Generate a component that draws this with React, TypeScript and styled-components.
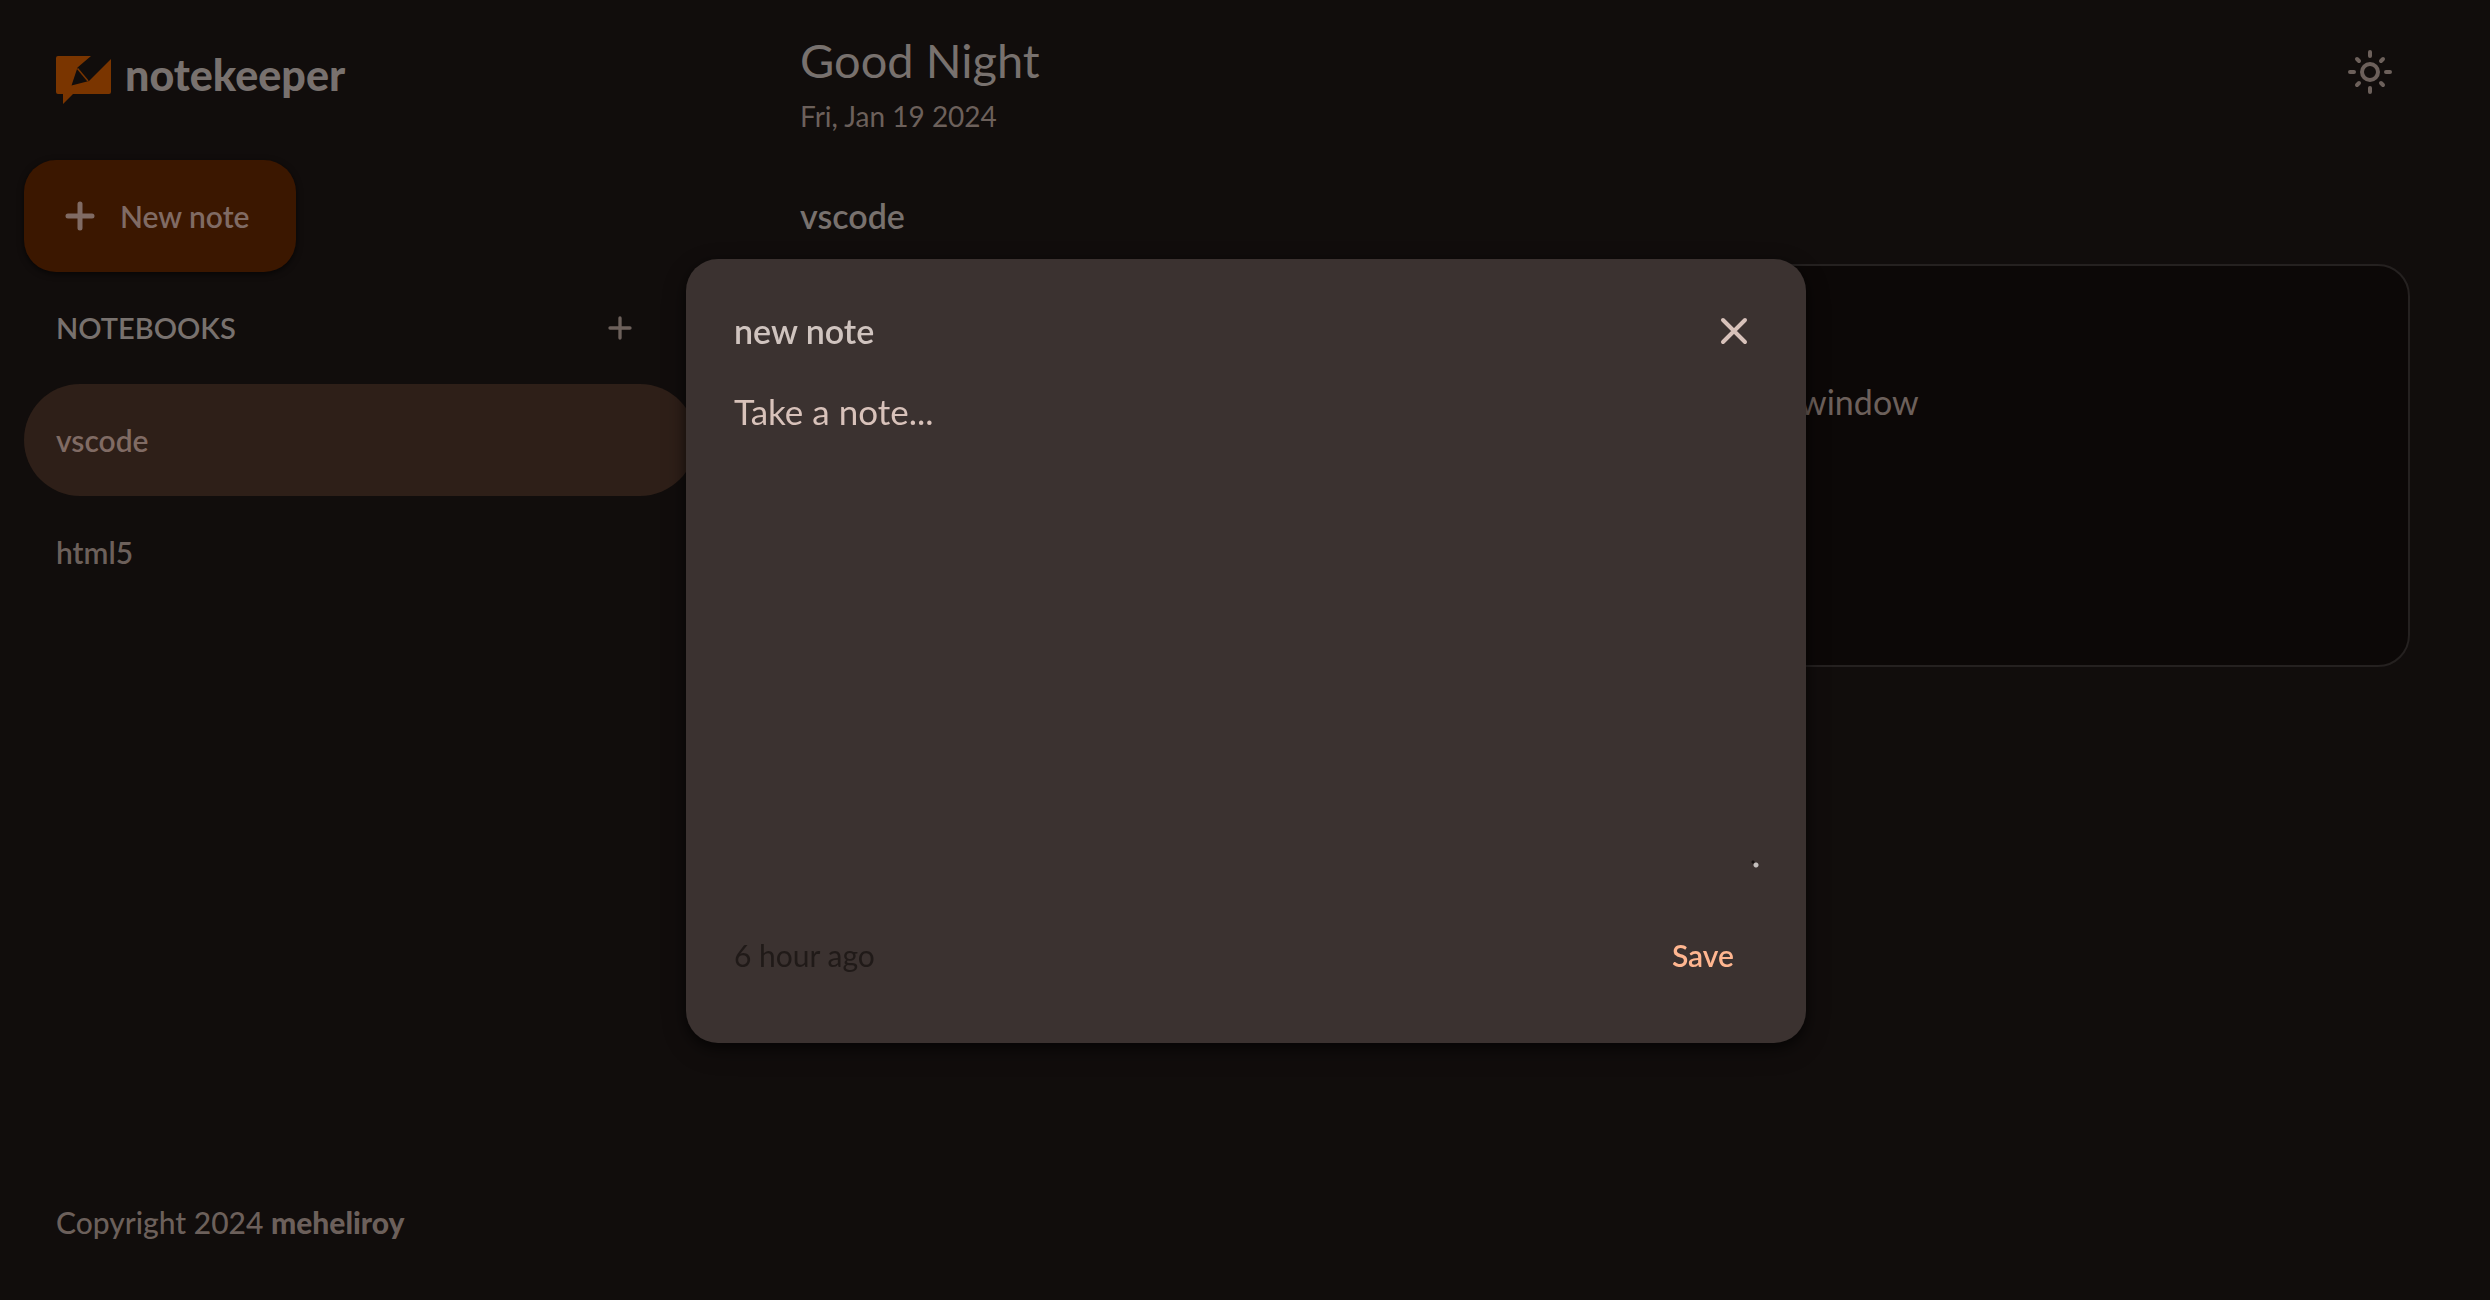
import React from "react";
import styled, { createGlobalStyle } from "styled-components";

const Global = createGlobalStyle`
  * { box-sizing: border-box; margin: 0; }
  body { margin: 0; background: #110d0c; font-family: Lato, "Open Sans", sans-serif; color: #78716e; }
  button { font: inherit; border: 0; background: none; padding: 0; cursor: pointer; }
  h1, h2, h3 { font-weight: 400; }
`;

const Page = styled.div`
  display: grid;
  grid-template-columns: 720px 1fr;
  min-height: 100vh;
`;

const Sidebar = styled.aside`
  display: flex;
  flex-direction: column;
  padding: 56px 24px 40px;
`;

const Brand = styled.a`
  display: flex;
  align-items: flex-start;
  gap: 14px;
  height: 48px;
  margin-bottom: 56px;
  padding-left: 32px;
  color: #78716e;
  font-size: 43px;
  font-weight: 900;
  line-height: 38px;
  text-decoration: none;
`;

const BrandMark = styled.svg`
  width: 55px;
  height: 48px;
`;

const NewNote = styled.button`
  && {
    display: flex;
    align-items: center;
    gap: 16px;
    align-self: flex-start;
    height: 112px;
    padding: 0 47px 0 32px;
    border-radius: 32px;
    background: #3b1700;
    color: #806b64;
    font-size: 30px;
    font-weight: 600;
    box-shadow: 0 2px 6px rgba(0, 0, 0, 0.6);
  }
`;

const SectionHead = styled.div`
  display: flex;
  align-items: center;
  justify-content: space-between;
  height: 112px;
  padding: 0 56px 0 32px;
`;

const SectionTitle = styled.h2`
  font-size: 29px;
  line-height: 40px;
  font-weight: 600;
`;

const IconButton = styled.button`
  display: grid;
  place-items: center;
  color: #6c605b;
  svg { display: block; }
`;

const NavItem = styled.a<{ $active?: boolean }>`
  display: flex;
  align-items: center;
  height: 112px;
  padding: 0 32px;
  border-radius: 56px;
  background: ${(p) => (p.$active ? "#2e1f18" : "transparent")};
  color: ${(p) => (p.$active ? "#806b64" : "#6c605b")};
  font-size: 30px;
  font-weight: 600;
  text-decoration: none;
`;

const Footer = styled.p`
  margin-top: auto;
  padding-left: 32px;
  color: #6c605b;
  font-size: 30px;
  font-weight: 500;
  line-height: 76px;
  a { color: inherit; font-weight: 900; text-decoration: none; }
`;

const Main = styled.main`
  padding: 32px 80px;
`;

const Header = styled.header`
  display: flex;
  justify-content: space-between;
  align-items: flex-start;
`;

const Greeting = styled.h1`
  font-size: 47px;
  line-height: 56px;
`;

const Today = styled.p`
  color: #6c605b;
  font-size: 28px;
  line-height: 56px;
`;

const ThemeButton = styled(IconButton)`
  width: 80px;
  height: 80px;
`;

const NotebookTitle = styled.h2`
  margin: 44px 0 20px;
  font-size: 34px;
  font-weight: 600;
  line-height: 56px;
`;

const Card = styled.article`
  min-height: 403px;
  padding: 32px 48px;
  border: 2px solid #252120;
  border-radius: 32px;
  background: #0c0807;
`;

const CardText = styled.p`
  padding-top: 76px;
  padding-left: 950px;
  color: #6c605b;
  font-size: 34px;
  line-height: 56px;
`;

const Overlay = styled.div`
  position: fixed;
  inset: 0;
  display: grid;
  place-items: center;
  padding: 2px 0 0 2px;
`;

const Dialog = styled.form`
  display: flex;
  flex-direction: column;
  width: 1120px;
  max-width: 90%;
  height: 784px;
  padding: 40px 44px 48px 48px;
  border-radius: 32px;
  background: #3b3230;
  box-shadow: 0 4px 12px rgba(0, 0, 0, 0.5), 0 8px 24px rgba(0, 0, 0, 0.3);
`;

const DialogTop = styled.div`
  display: flex;
  align-items: center;
  gap: 16px;
  height: 64px;
`;

const TitleInput = styled.input`
  flex: 1;
  min-width: 0;
  border: 0;
  padding: 0;
  outline: 0;
  background: none;
  color: #d0c4bf;
  font: 600 34px/56px Lato, "Open Sans", sans-serif;
`;

const CloseButton = styled(IconButton)`
  && {
    width: 56px;
    height: 56px;
    color: #d8c2ba;
  }
`;

const NoteText = styled.textarea`
  flex: 1;
  margin-top: 20px;
  padding: 0;
  border: 0;
  outline: 0;
  background: none;
  color: #d0c4bf;
  font: 400 35px/56px Lato, "Open Sans", sans-serif;
  resize: vertical;
  &::placeholder { color: #d8c2ba; opacity: 1; }
  &::-webkit-resizer {
    background:
      radial-gradient(circle at 9px 9px, #c4bfbd 2px, transparent 3px),
      radial-gradient(circle at 6px 6px, #14100f 1px, transparent 2px);
  }
`;

const DialogBottom = styled.div`
  display: flex;
  align-items: center;
  justify-content: space-between;
  height: 80px;
  margin-top: 44px;
`;

const Time = styled.span`
  color: #201a18;
  font-size: 30px;
`;

const Save = styled.button`
  && {
    padding: 20px 28px;
    color: #ffb690;
    font-size: 30px;
    font-weight: 600;
  }
`;

const Plus = ({ size, width }: { size: number; width: number }) => (
  <svg width={size} height={size} viewBox="0 0 48 48" stroke="currentColor" strokeWidth={width} strokeLinecap="round">
    <path d="M24 12v24M12 24h24" />
  </svg>
);

export default function App() {
  return (
    <>
      <Global />
      <Page>
        <Sidebar>
          <Brand href="#">
            <BrandMark viewBox="0 0 55 48" aria-hidden="true">
              <path
                fill="#7a3500"
                d="M2 0H35L21.500 11.500L15.500 29.500L33 25L55 3V36Q55 38 53 38H17L7 48V38H2Q0 38 0 36V2Q0 0 2 0Z"
              />
              <path d="M21.500 12.500L32 25" stroke="#7a3500" strokeWidth="1.500" />
            </BrandMark>
            notekeeper
          </Brand>
          <NewNote type="button">
            <Plus size={48} width={5} />
            New note
          </NewNote>
          <SectionHead>
            <SectionTitle>NOTEBOOKS</SectionTitle>
            <IconButton type="button" aria-label="Add notebook">
              <Plus size={40} width={4} />
            </IconButton>
          </SectionHead>
          <nav>
            <NavItem href="#vscode" $active>vscode</NavItem>
            <NavItem href="#html5">html5</NavItem>
          </nav>
          <Footer>
            Copyright 2024 <a href="#author">meheliroy</a>
          </Footer>
        </Sidebar>
        <Main>
          <Header>
            <div>
              <Greeting>Good Night</Greeting>
              <Today>Fri, Jan 19 2024</Today>
            </div>
            <ThemeButton type="button" aria-label="Toggle theme">
              <svg width="48" height="48" viewBox="0 0 48 48" fill="none" stroke="currentColor" strokeWidth="4" strokeLinecap="round">
                <circle cx="24" cy="24" r="8" />
                <path d="M24 4v4M24 40v4M4 24h4M40 24h4M11 11l2 2M35 35l2 2M37 11l-2 2M13 35l-2 2" />
              </svg>
            </ThemeButton>
          </Header>
          <NotebookTitle>vscode</NotebookTitle>
          <Card>
            <CardText>window</CardText>
          </Card>
        </Main>
      </Page>
      <Overlay>
        <Dialog onSubmit={(e) => e.preventDefault()}>
          <DialogTop>
            <TitleInput aria-label="Title" defaultValue="new note" />
            <CloseButton type="button" aria-label="Close">
              <svg width="56" height="56" viewBox="0 0 56 56" stroke="currentColor" strokeWidth="4" strokeLinecap="round">
                <path d="M17 17l22 22M39 17L17 39" />
              </svg>
            </CloseButton>
          </DialogTop>
          <NoteText aria-label="Note" placeholder="Take a note..." />
          <DialogBottom>
            <Time>6 hour ago</Time>
            <Save type="submit">Save</Save>
          </DialogBottom>
        </Dialog>
      </Overlay>
    </>
  );
}
